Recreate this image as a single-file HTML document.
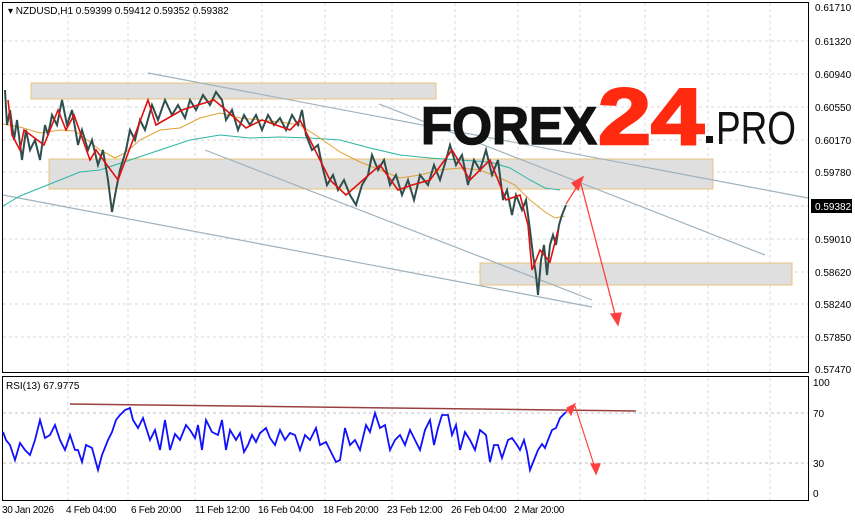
<!DOCTYPE html>
<html><head><meta charset="utf-8"><style>
body{margin:0;background:#fff;width:855px;height:521px;overflow:hidden;font-family:"Liberation Sans",sans-serif}
</style></head><body>
<svg width="855" height="521" xmlns="http://www.w3.org/2000/svg" font-family="Liberation Sans, sans-serif">
<rect width="855" height="521" fill="#fff"/>
<g stroke="#d8d8d8" stroke-dasharray="3,3" stroke-width="1">
<line x1="3" y1="41" x2="808" y2="41"/><line x1="3" y1="74" x2="808" y2="74"/><line x1="3" y1="107" x2="808" y2="107"/><line x1="3" y1="140" x2="808" y2="140"/><line x1="3" y1="172" x2="808" y2="172"/><line x1="3" y1="239" x2="808" y2="239"/><line x1="3" y1="272" x2="808" y2="272"/><line x1="3" y1="304" x2="808" y2="304"/><line x1="3" y1="337" x2="808" y2="337"/>
<line x1="68" y1="3" x2="68" y2="372"/><line x1="128" y1="3" x2="128" y2="372"/><line x1="195" y1="3" x2="195" y2="372"/><line x1="262" y1="3" x2="262" y2="372"/><line x1="325" y1="3" x2="325" y2="372"/><line x1="392" y1="3" x2="392" y2="372"/><line x1="455" y1="3" x2="455" y2="372"/><line x1="518" y1="3" x2="518" y2="372"/><line x1="580" y1="3" x2="580" y2="372"/><line x1="645" y1="3" x2="645" y2="372"/><line x1="708" y1="3" x2="708" y2="372"/><line x1="770" y1="3" x2="770" y2="372"/>
<line x1="68" y1="378" x2="68" y2="500"/><line x1="128" y1="378" x2="128" y2="500"/><line x1="195" y1="378" x2="195" y2="500"/><line x1="262" y1="378" x2="262" y2="500"/><line x1="325" y1="378" x2="325" y2="500"/><line x1="392" y1="378" x2="392" y2="500"/><line x1="455" y1="378" x2="455" y2="500"/><line x1="518" y1="378" x2="518" y2="500"/><line x1="580" y1="378" x2="580" y2="500"/><line x1="645" y1="378" x2="645" y2="500"/><line x1="708" y1="378" x2="708" y2="500"/><line x1="770" y1="378" x2="770" y2="500"/>
</g>
<line x1="3" y1="206" x2="808" y2="206" stroke="#cfcfcf" stroke-dasharray="3,3"/>
<rect x="31" y="83" width="405" height="16" fill="#dcdcdc" stroke="#e8c070" opacity=".9"/>
<rect x="49" y="159" width="664" height="30" fill="#dcdcdc" stroke="#e8c070" opacity=".9"/>
<rect x="480" y="263" width="312" height="22" fill="#dcdcdc" stroke="#e8c070" opacity=".9"/>
<g stroke="#9fb2bf" stroke-width="1.2">
<line x1="148" y1="73" x2="808" y2="198"/>
<line x1="379" y1="104" x2="765" y2="255"/>
<line x1="205" y1="150" x2="592" y2="300"/>
<line x1="3" y1="195" x2="592" y2="307"/>
</g>
<polyline fill="none" stroke="#2bb5a5" stroke-width="1" points="3,206 20,196 40,188 60,180 80,172 100,170 130,160 160,150 190,140 220,135 250,138 280,137 310,138 340,140 370,148 400,155 430,158 460,160 490,162 510,168 530,180 545,188 560,190"/>
<polyline fill="none" stroke="#e0a030" stroke-width="1" points="3,124 20,127 40,133 60,130 75,131 90,142 100,150 115,158 125,153 140,140 160,130 180,128 200,118 220,113 240,118 260,120 280,122 300,125 320,138 340,152 360,162 380,170 400,178 420,175 440,170 460,168 480,170 500,178 515,185 530,200 545,212 555,218 565,216"/>
<polyline fill="none" stroke="#2f4f4f" stroke-width="2" points="5,90 7,125 10,110 14,140 17,120 22,160 26,130 30,150 35,140 40,160 45,125 48,135 52,115 57,125 62,100 67,125 72,110 78,145 82,130 88,150 92,140 98,165 103,150 108,180 112,212 116,190 120,170 126,150 130,130 135,140 140,120 145,130 152,105 158,120 165,100 172,115 178,105 185,118 190,100 196,110 203,95 210,105 216,92 222,100 226,120 232,110 238,130 244,115 250,125 256,115 262,130 268,115 274,125 280,118 286,130 292,115 298,125 302,110 306,135 312,150 318,145 322,165 327,185 333,175 338,190 344,180 350,195 356,205 362,185 368,175 372,155 378,170 384,160 390,185 396,175 402,195 408,180 414,200 420,175 428,185 434,165 440,180 446,160 450,145 456,165 462,155 468,185 474,160 480,170 486,150 492,175 498,160 503,200 507,190 512,215 516,195 522,210 526,200 530,230 533,255 536,275 538,295 541,260 544,245 547,275 550,245 553,235 556,245 559,225 562,215 566,205"/>
<polyline fill="none" stroke="#e01010" stroke-width="1.6" points="8,100 12,135 20,150 24,130 44,145 58,110 66,130 74,115 90,160 96,150 118,180 148,100 156,125 182,110 214,100 226,110 246,128 262,120 290,130 300,120 330,180 346,195 380,165 398,190 412,185 430,180 452,150 470,180 490,160 506,200 520,195 528,225 532,270 540,250 550,262 558,230"/>
<g stroke="#ff4040" stroke-width="1.3" fill="#ff4040">
<line x1="566" y1="204" x2="580" y2="182"/><polygon points="583,177 572,183 578,190"/>
<line x1="581" y1="184" x2="616" y2="318"/><polygon points="618,325 611,314 621,313"/>
</g>
<text x="421" y="144" font-size="53" font-weight="bold" fill="#111" stroke="#111" stroke-width="1.5" textLength="176" lengthAdjust="spacingAndGlyphs">FOREX</text>
<text x="598" y="144" font-size="80" font-weight="bold" fill="#ff2a10" stroke="#ff2a10" stroke-width="2.5" textLength="106" lengthAdjust="spacingAndGlyphs">24</text>
<rect x="706" y="136" width="7" height="7" fill="#111"/>
<text x="716" y="144" font-size="46" fill="#111" textLength="80" lengthAdjust="spacingAndGlyphs">PRO</text>
<rect x="2.5" y="2.5" width="806" height="370" fill="none" stroke="#000"/>
<rect x="2.5" y="376.5" width="806" height="124" fill="none" stroke="#000"/>
<text x="8" y="14" font-size="10" fill="#000">▾ NZDUSD,H1  0.59399 0.59412 0.59352 0.59382</text>
<g font-size="10" fill="#000">
<text x="815" y="11">0.61710</text><text x="815" y="45">0.61320</text><text x="815" y="78">0.60940</text><text x="815" y="111">0.60550</text><text x="815" y="144">0.60170</text><text x="815" y="176">0.59780</text><text x="815" y="243">0.59010</text><text x="815" y="276">0.58620</text><text x="815" y="308">0.58240</text><text x="815" y="341">0.57850</text><text x="815" y="373">0.57470</text>
</g>
<rect x="811" y="199" width="41" height="14" fill="#000"/>
<text x="815" y="210" font-size="10" fill="#fff">0.59382</text>
<g stroke="#c0c0c0" stroke-dasharray="3,3"><line x1="3" y1="413" x2="808" y2="413"/><line x1="3" y1="463" x2="808" y2="463"/></g>
<text x="6" y="389" font-size="10" fill="#000">RSI(13) 67.9775</text>
<line x1="70" y1="404" x2="636" y2="411" stroke="#9a4040" stroke-width="1.5"/>
<polyline fill="none" stroke="#1010ff" stroke-width="1.8" points="3,432 6,440 10,445 15,460 20,443 25,450 30,455 35,440 40,420 45,438 50,435 55,425 60,440 65,450 70,435 75,450 78,450 82,462 86,445 92,448 98,470 102,455 108,440 112,432 116,420 120,415 125,410 130,408 133,420 138,428 143,418 150,440 155,430 160,450 165,420 170,450 175,434 180,440 186,425 190,430 195,438 198,425 202,450 206,420 212,432 218,435 222,420 226,450 230,430 236,440 240,433 244,452 248,445 252,435 256,442 260,433 266,428 270,438 275,445 280,430 285,440 290,433 295,435 300,450 305,435 310,440 316,428 320,445 326,442 330,450 336,462 340,460 345,428 350,445 355,440 360,450 366,425 370,432 375,413 380,428 385,425 390,450 395,440 400,435 405,445 410,430 415,440 420,450 425,430 430,420 434,445 438,428 442,415 448,415 452,435 456,425 460,450 465,432 470,440 475,450 480,430 486,435 490,462 494,445 498,445 502,458 508,440 512,438 517,445 520,450 524,440 527,452 530,470 534,460 538,450 542,444 545,448 548,440 552,430 556,428 560,418 563,415 566,412"/>
<g stroke="#ff4040" stroke-width="1.2" fill="#ff4040">
<line x1="566" y1="412" x2="572" y2="408"/><polygon points="575,404 567,408 571,415"/>
<line x1="575" y1="406" x2="595" y2="468"/><polygon points="596,474 591,464 600,464"/>
</g>
<g font-size="10" fill="#000"><text x="813" y="386">100</text><text x="813" y="417">70</text><text x="813" y="467">30</text><text x="813" y="497">0</text></g>
<g font-size="10" fill="#000" letter-spacing="-0.3">
<text x="2" y="513">30 Jan 2026</text><text x="66" y="513">4 Feb 04:00</text><text x="131" y="513">6 Feb 20:00</text><text x="195" y="513">11 Feb 12:00</text><text x="258" y="513">16 Feb 04:00</text><text x="323" y="513">18 Feb 20:00</text><text x="387" y="513">23 Feb 12:00</text><text x="451" y="513">26 Feb 04:00</text><text x="514" y="513">2 Mar 20:00</text>
</g>
</svg>
</body></html>
